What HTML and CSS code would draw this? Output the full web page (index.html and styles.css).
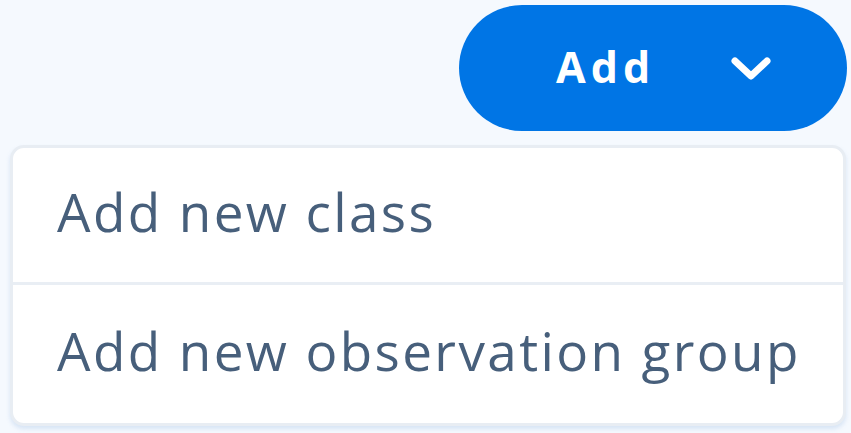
FILE: index.html
```html
<!DOCTYPE html>
<html>
<head>
<meta charset="utf-8">
<link rel="stylesheet" href="styles.css">
</head>
<body>
<div class="page">
  <div class="toolbar">
    <button class="add-btn">
      <span class="add-label">Add</span>
      <svg class="chev" width="40" height="24" viewBox="0 0 40 24"><polyline points="4,4 20,19 36,4" fill="none" stroke="#ffffff" stroke-width="7" stroke-linecap="round" stroke-linejoin="round"/></svg>
    </button>
  </div>
  <div class="menu">
    <div class="item">Add new class</div>
    <div class="item second">Add new observation group</div>
  </div>
</div>
</body>
</html>
```
FILE: styles.css
```css
html, body {
  margin: 0;
  padding: 0;
  background: #f5f9fe;
}
.page {
  width: 851px;
  height: 433px;
  overflow: hidden;
  font-family: "Open Sans", "Lato", sans-serif;
}
.toolbar {
  display: flex;
  justify-content: flex-end;
  padding: 5px 4px 0 0;
}
.add-btn {
  width: 388px;
  height: 126px;
  border: none;
  border-radius: 63px;
  background: #0075e5;
  color: #ffffff;
  display: flex;
  align-items: center;
  padding: 0 0 0 97px;
  font-family: "Open Sans", sans-serif;
  font-weight: 700;
  font-size: 43px;
  letter-spacing: 5px;
}
.add-label {
  line-height: 1;
  margin-top: -3px;
}
.chev {
  margin-left: 76px;
  margin-top: 2px;
}
.menu {
  margin: 14px 5px 0 10px;
  height: 281px;
  box-sizing: border-box;
  border: 3px solid #e8edf3;
  border-radius: 14px;
  background: #ffffff;
  box-shadow: 0 3px 4px rgba(180, 205, 235, 0.45);
  display: flex;
  flex-direction: column;
}
.item {
  height: 134px;
  display: flex;
  align-items: center;
  padding-left: 44px;
  padding-bottom: 8px;
  box-sizing: border-box;
  color: #475f7b;
  font-size: 53px;
  letter-spacing: 2.4px;
}
.item.second {
  height: 141px;
  border-top: 3px solid #e9eef4;
}
```
